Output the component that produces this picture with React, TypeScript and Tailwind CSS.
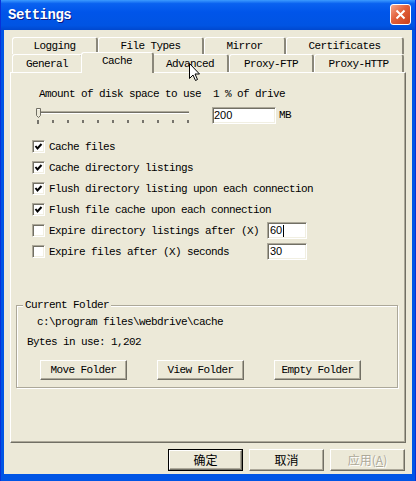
import React from "react"

const mono = "font-['Liberation_Mono',monospace] text-[11px] tracking-[-0.6px] leading-[12px] text-black"
const raised =
  "border border-t-white border-l-white border-r-[#716F64] border-b-[#716F64] shadow-[inset_-1px_-1px_0_#ACA899] bg-[#ECE9D8]"
const sunken =
  "border border-t-[#ACA899] border-l-[#ACA899] border-r-white border-b-white shadow-[inset_1px_1px_0_#716F64,inset_-1px_-1px_0_#F1EFE2] bg-white"

function Tab({ label, width, selected }: { label: string; width: number; selected?: boolean }) {
  return (
    <div
      style={{ width }}
      className={`${mono} flex items-center justify-center rounded-t-[3px] border-t border-l border-r-2 border-t-white border-l-white border-r-[#8A877A] bg-[#ECE9D8] ${
        selected ? "relative z-10 -mx-[2px] -mt-[2px] h-[21px] pb-[4px]" : "h-full"
      }`}
    >
      {label}
    </div>
  )
}

function Check({ checked }: { checked: boolean }) {
  return (
    <span className={`${sunken} flex h-[13px] w-[13px] shrink-0 items-center justify-center`}>
      {checked && (
        <svg width="9" height="9" viewBox="0 0 9 9">
          <path d="M1.5 4 L3.5 6.5 L7.5 2" fill="none" stroke="#000" strokeWidth="2" />
        </svg>
      )}
    </span>
  )
}

function CheckRow({ label, checked, value }: { label: string; checked: boolean; value?: string }) {
  return (
    <div className="flex h-[21px] items-center pl-[21px]">
      <Check checked={checked} />
      <span className={`${mono} ml-[4px] ${value !== undefined ? "w-[218px]" : ""}`}>{label}</span>
      {value !== undefined && (
        <div className={`${sunken} flex h-[17px] w-[40px] items-center pl-[2px] font-['Liberation_Sans',sans-serif] text-[11px]`}>
          {value}
          {value === "60" && <span className="ml-[1px] h-[12px] w-px bg-black" />}
        </div>
      )}
    </div>
  )
}

function Button({ label, width }: { label: string; width: number }) {
  return (
    <div style={{ width }} className={`${raised} ${mono} flex h-[20px] items-center justify-center`}>
      {label}
    </div>
  )
}

function Slider() {
  const ticks = Array.from({ length: 11 }, (_, i) => 3 + i * 15)
  return (
    <svg width="156" height="17" viewBox="0 0 156 17" className="ml-[24px] shrink-0">
      <line x1="2" y1="4.5" x2="154" y2="4.5" stroke="#ACA899" />
      <line x1="2" y1="5.5" x2="154" y2="5.5" stroke="#716F64" />
      <line x1="2" y1="6.5" x2="154" y2="6.5" stroke="#FFFFFF" />
      <path d="M1.5 1.5 H5.5 V8.5 L3.5 10.5 L1.5 8.5 Z" fill="#ECE9D8" stroke="#716F64" />
      <path d="M2.5 2.5 H4.5" stroke="#fff" />
      {ticks.map((x) => (
        <rect key={x} x={x - 0.5} y="13" width="1" height={x === 3 ? 4 : 3} fill="#000" />
      ))}
    </svg>
  )
}

function DialogButton({ label, isDefault, disabled }: { label: React.ReactNode; isDefault?: boolean; disabled?: boolean }) {
  const inner = (
    <div
      className={`${raised} flex h-full w-full items-center justify-center font-['Noto_Sans_CJK_SC',sans-serif] text-[12px] ${
        disabled ? "text-[#ACA899] [text-shadow:1px_1px_0_#fff]" : "text-black"
      }`}
    >
      {label}
    </div>
  )
  return (
    <div className={`h-[22px] w-[75px] ${isDefault ? "border border-black" : ""}`}>{inner}</div>
  )
}

export default function App() {
  return (
    <div className="relative flex h-[481px] w-[416px] flex-col overflow-hidden border-l border-r border-[#0831D9] bg-[#0055E5]">
      <div className="flex h-[30px] shrink-0 items-center justify-between bg-[linear-gradient(to_bottom,#3C9BFF_0%,#0A62F0_12%,#0055EA_40%,#0054E3_85%,#0048CF_100%)] pl-[7px] pr-[4px]">
        <span className="font-['Liberation_Mono',monospace] text-[14px] font-bold tracking-[-0.5px] text-white [text-shadow:1px_1px_0_#0A1883]">
          Settings
        </span>
        <div className="mb-[2px] flex h-[21px] w-[21px] items-center justify-center rounded-[3px] border border-white bg-[linear-gradient(135deg,#F6A88E_0%,#E2603A_45%,#C93F1C_100%)]">
          <svg width="11" height="11" viewBox="0 0 11 11">
            <path d="M1.5 1.5 L9.5 9.5 M9.5 1.5 L1.5 9.5" stroke="#fff" strokeWidth="2" />
          </svg>
        </div>
      </div>

      <div className="mb-[7px] ml-[3px] mr-[3px] flex flex-1 flex-col bg-[#ECE9D8] px-[6px] pt-[7px]">
        <div className="flex h-[17px] pl-[2px]">
          <Tab label="Logging" width={86} />
          <Tab label="File Types" width={106} />
          <Tab label="Mirror" width={82} />
          <Tab label="Certificates" width={118} />
        </div>
        <div className="flex h-[18px] pl-[2px]">
          <Tab label="General" width={71} />
          <Tab label="Cache" width={73} selected />
          <Tab label="Advanced" width={77} />
          <Tab label="Proxy-FTP" width={85} />
          <Tab label="Proxy-HTTP" width={90} />
        </div>

        <div className="h-[371px] border border-t-white border-l-white border-r-[#716F64] border-b-[#716F64] shadow-[inset_-1px_-1px_0_#ACA899]">
          <div className={`${mono} mt-[15px] pl-[28px] whitespace-pre`}>Amount of disk space to use  1 % of drive</div>

          <div className="mt-[7px] flex h-[17px] items-start">
            <Slider />
            <div className={`${sunken} ml-[21px] flex h-[17px] w-[64px] items-center pl-[1px] font-['Liberation_Sans',sans-serif] text-[11px]`}>
              200
            </div>
            <span className={`${mono} ml-[3px] leading-[17px]`}>MB</span>
          </div>

          <div className="mt-[12px] flex flex-col">
            <CheckRow label="Cache files" checked />
            <CheckRow label="Cache directory listings" checked />
            <CheckRow label="Flush directory listing upon each connection" checked />
            <CheckRow label="Flush file cache upon each connection" checked />
            <CheckRow label="Expire directory listings after (X)" checked={false} value="60" />
            <CheckRow label="Expire files after (X) seconds" checked={false} value="30" />
          </div>

          <div className="relative ml-[5px] mt-[43px] h-[83px] w-[382px] border border-[#ACA899] shadow-[inset_1px_1px_0_#fff,1px_1px_0_#fff]">
            <span className={`${mono} absolute -top-[7px] left-[6px] bg-[#ECE9D8] px-[2px]`}>Current Folder</span>
            <div className={`${mono} mt-[10px] pl-[20px]`}>c:\program files\webdrive\cache</div>
            <div className={`${mono} mt-[8px] pl-[10px]`}>Bytes in use: 1,202</div>
            <div className="mt-[12px] flex gap-[30px] pl-[23px]">
              <Button label="Move Folder" width={87} />
              <Button label="View Folder" width={87} />
              <Button label="Empty Folder" width={87} />
            </div>
          </div>
        </div>

        <div className="mt-[6px] flex justify-end gap-[6px] pr-[1px]">
          <DialogButton label="确定" isDefault />
          <DialogButton label="取消" />
          <DialogButton
            disabled
            label={
              <span>
                应用(<span className="underline">A</span>)
              </span>
            }
          />
        </div>
      </div>

      <svg width="12" height="19" viewBox="0 0 12 19" className="absolute left-[188px] top-[63px]">
        <path d="M0.5 0.5 L0.5 15.5 L4 12 L6.5 17.5 L8.5 16.5 L6 11 L10.5 11 Z" fill="#fff" stroke="#000" />
      </svg>
    </div>
  )
}
